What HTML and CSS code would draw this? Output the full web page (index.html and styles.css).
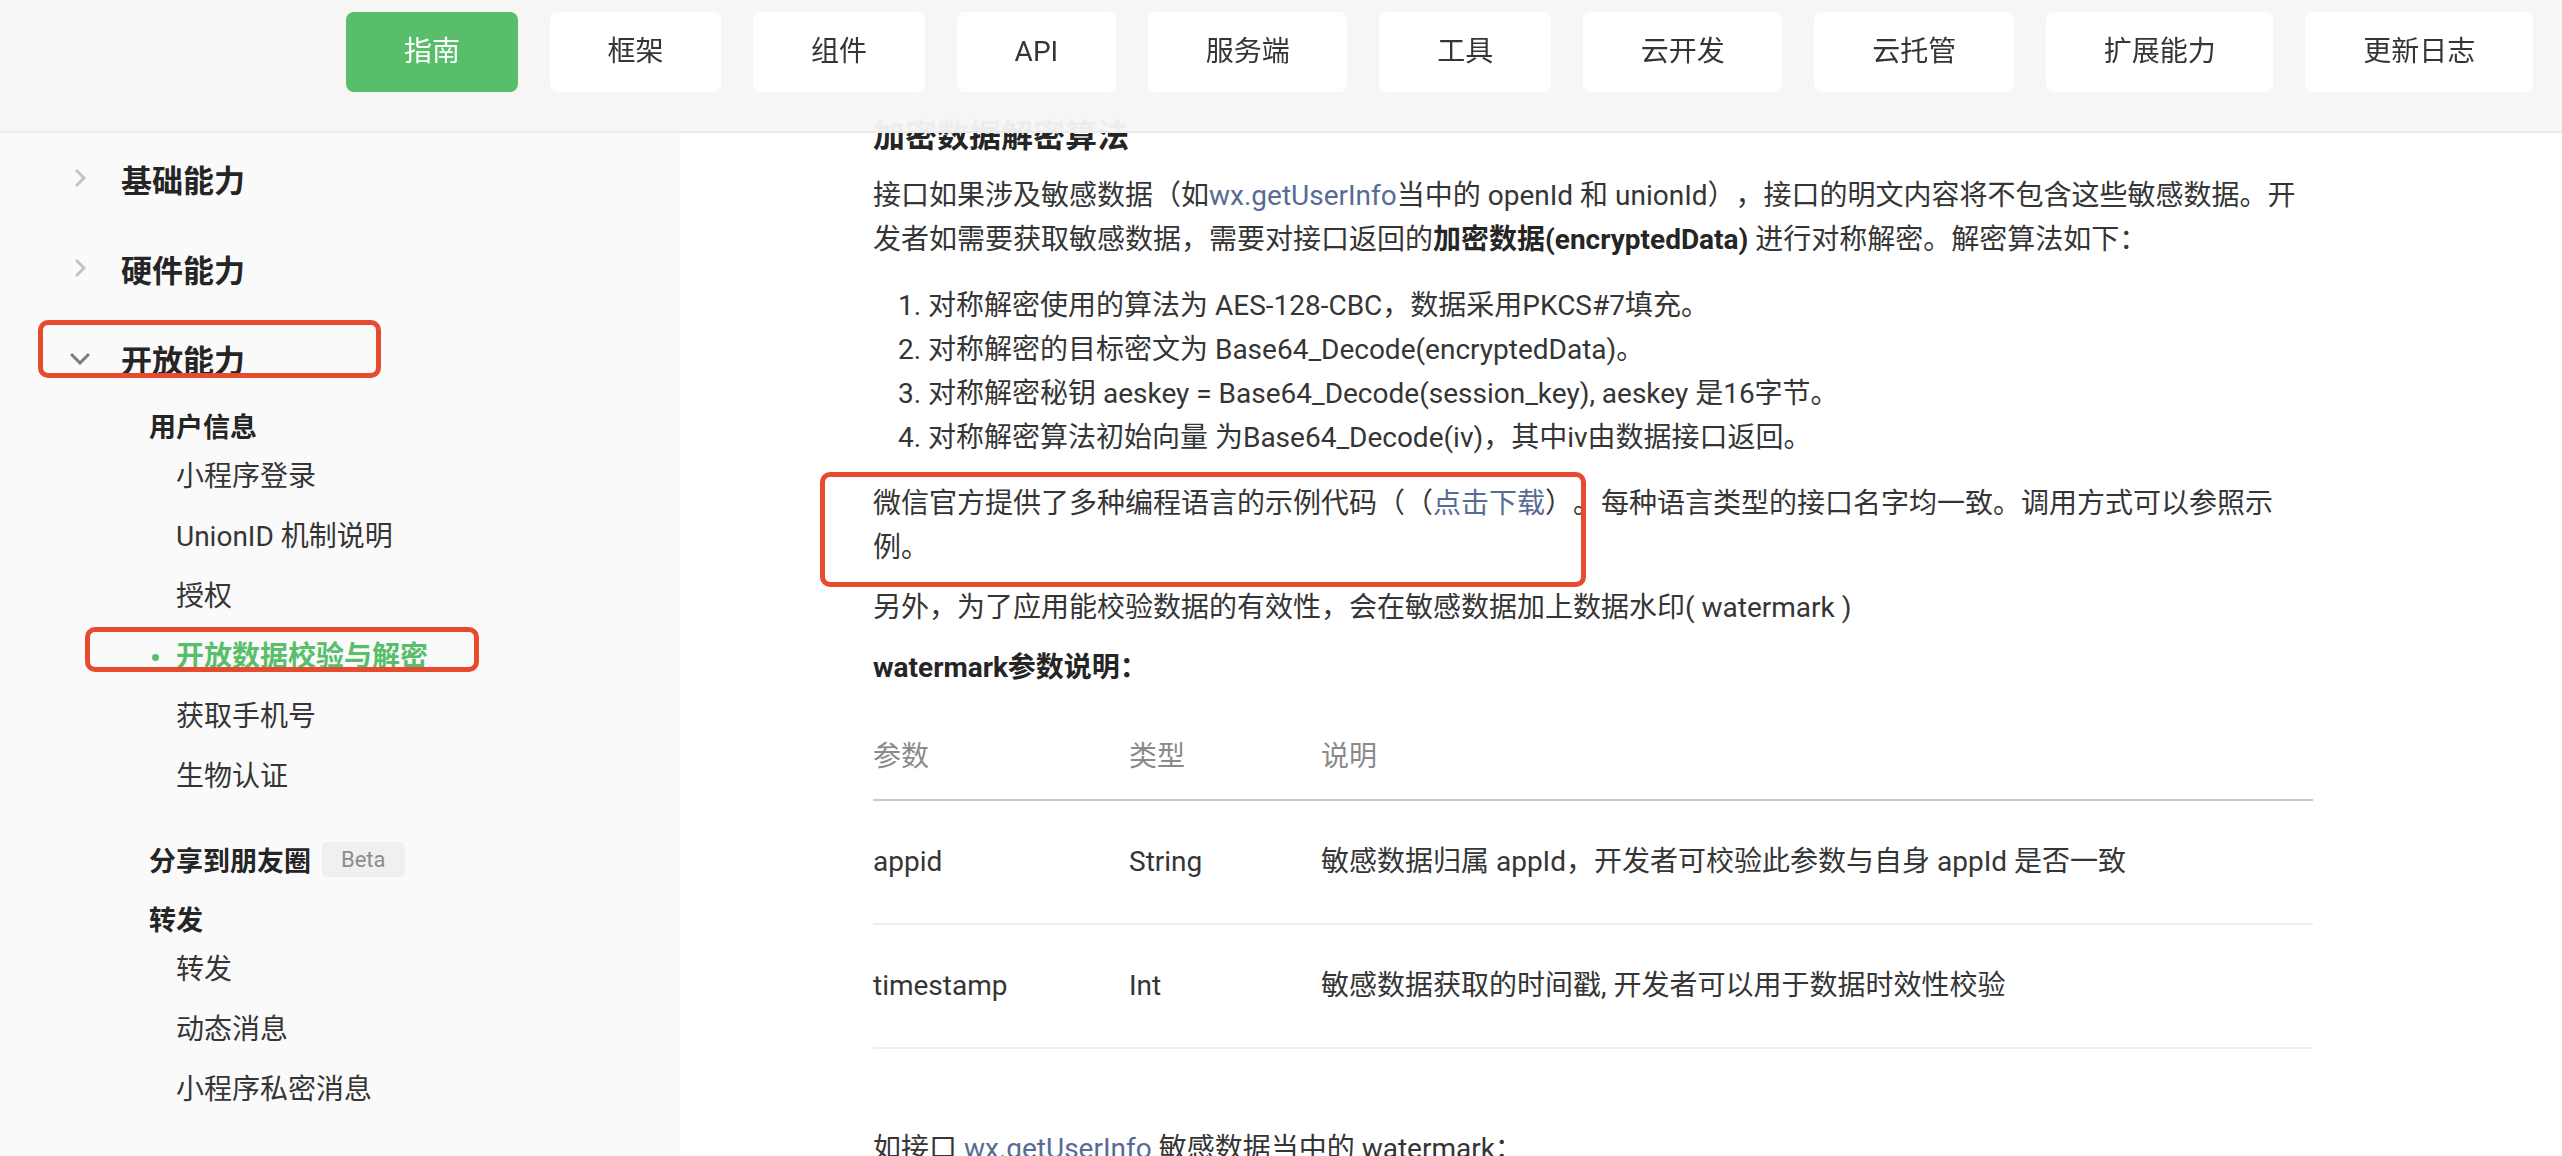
FILE: index.html
```html
<!DOCTYPE html>
<html lang="zh-CN">
<head>
    <meta charset="UTF-8">
    <meta name="viewport" content="width=device-width, initial-scale=1.0">
    <title>开放数据校验与解密 | 微信开放文档</title>
    <link rel="stylesheet" href="styles.css">
</head>
<body>

    <header class="topbar">
        <nav class="topnav">
            <a class="topnav-item active">指南</a>
            <a class="topnav-item">框架</a>
            <a class="topnav-item">组件</a>
            <a class="topnav-item">API</a>
            <a class="topnav-item">服务端</a>
            <a class="topnav-item">工具</a>
            <a class="topnav-item">云开发</a>
            <a class="topnav-item">云托管</a>
            <a class="topnav-item">扩展能力</a>
            <a class="topnav-item">更新日志</a>
        </nav>
    </header>

    <div class="page">
        <aside class="sidebar">
            <div class="nav-row">
                <svg class="arrow" viewBox="0 0 20 20"><polyline points="6,2 14,10 6,18" /></svg>
                <span>基础能力</span>
            </div>
            <div class="nav-row">
                <svg class="arrow" viewBox="0 0 20 20"><polyline points="6,2 14,10 6,18" /></svg>
                <span>硬件能力</span>
            </div>
            <div class="nav-row open">
                <svg class="arrow" viewBox="0 0 20 20"><polyline points="1,6 10,15 19,6" /></svg>
                <span>开放能力</span>
                <i class="annot annot-open"></i>
            </div>

            <div class="nav-group">
                <div class="group-title">用户信息</div>
                <ul class="group-items">
                    <li>小程序登录</li>
                    <li>UnionID 机制说明</li>
                    <li>授权</li>
                    <li class="active">开放数据校验与解密<i class="annot annot-active"></i></li>
                    <li>获取手机号</li>
                    <li>生物认证</li>
                </ul>
            </div>
            <div class="nav-group">
                <div class="group-title">分享到朋友圈 <span class="badge">Beta</span></div>
            </div>
            <div class="nav-group">
                <div class="group-title">转发</div>
                <ul class="group-items">
                    <li>转发</li>
                    <li>动态消息</li>
                    <li>小程序私密消息</li>
                </ul>
            </div>
        </aside>

        <main class="content">
            <div class="doc">
                <h3>加密数据解密算法</h3>
                <p>接口如果涉及敏感数据（如<a>wx.getUserInfo</a>当中的 openId 和 unionId），接口的明文内容将不包含这些敏感数据。开发者如需要获取敏感数据，需要对接口返回的<strong>加密数据(encryptedData)</strong> 进行对称解密。解密算法如下：</p>
                <ol>
                    <li>对称解密使用的算法为 AES-128-CBC，数据采用PKCS#7填充。</li>
                    <li>对称解密的目标密文为 Base64_Decode(encryptedData)。</li>
                    <li>对称解密秘钥 aeskey = Base64_Decode(session_key), aeskey 是16字节。</li>
                    <li>对称解密算法初始向量 为Base64_Decode(iv)，其中iv由数据接口返回。</li>
                </ol>
                <p class="marked">微信官方提供了多种编程语言的示例代码（（<a>点击下载</a>）。每种语言类型的接口名字均一致。调用方式可以参照示例。<i class="annot annot-sample"></i></p>
                <p>另外，为了应用能校验数据的有效性，会在敏感数据加上数据水印( watermark )</p>
                <p><strong>watermark参数说明：</strong></p>

                <table class="params">
                    <thead>
                        <tr><th>参数</th><th>类型</th><th>说明</th></tr>
                    </thead>
                    <tbody>
                        <tr><td>appid</td><td>String</td><td>敏感数据归属 appId，开发者可校验此参数与自身 appId 是否一致</td></tr>
                        <tr><td>timestamp</td><td>Int</td><td>敏感数据获取的时间戳, 开发者可以用于数据时效性校验</td></tr>
                    </tbody>
                </table>

                <p>如接口 <a>wx.getUserInfo</a> 敏感数据当中的 watermark：</p>
            </div>
        </main>
    </div>

</body>
</html>
```

FILE: styles.css
```css
body {
    margin: 0;
    font-family: Roboto, "Noto Sans CJK SC", sans-serif;
    color: #353535;
    background-color: #fff;
    text-spacing-trim: space-all;
}
a {
    color: #576b95;
    text-decoration: none;
}

/* 顶部导航 */
.topbar {
    position: fixed;
    top: 0;
    left: 0;
    right: 0;
    height: 131px;
    background-color: rgba(246, 246, 246, 0.96);
    border-bottom: 2px solid #ebebeb;
    z-index: 10;
}
.topnav {
    display: flex;
    justify-content: flex-end;
    gap: 32px;
    padding: 12px 29px 0 0;
}
.topnav-item {
    height: 80px;
    line-height: 80px;
    padding: 0 57.75px;
    background-color: #fff;
    border-radius: 8px;
    font-size: 28px;
    color: #353535;
}
.topnav-item.active {
    background-color: #58be6a;
    color: #fff;
}

.page {
    display: flex;
    min-height: 100vh;
}

/* 左侧菜单 */
.sidebar {
    flex: none;
    width: 680px;
    padding-top: 133px;
    background-color: #fafafa;
}
.nav-row {
    position: relative;
    display: flex;
    align-items: center;
    height: 90px;
    padding-left: 70px;
    font-size: 31px;
    font-weight: bold;
    color: #252525;
}
.arrow {
    width: 20px;
    height: 20px;
    margin-right: 31px;
    fill: none;
    stroke: #c4c4c4;
    stroke-width: 3;
}
.nav-row.open .arrow {
    stroke: #7a7a7a;
}
.nav-group {
    padding-left: 149px;
}
.nav-group + .nav-group {
    margin-top: 15px;
}
.group-title {
    display: flex;
    align-items: center;
    height: 44px;
    font-size: 27px;
    font-weight: bold;
    color: #252525;
}
.badge {
    margin-left: 11px;
    padding: 0 19px;
    height: 35px;
    line-height: 35px;
    font-size: 22px;
    font-weight: normal;
    color: #8c8c8c;
    background-color: #f0f0f0;
    border-radius: 5px;
}
.group-items {
    list-style: none;
    margin: 0;
    padding: 0 0 15px 27px;
}
.group-items li {
    position: relative;
    height: 60px;
    line-height: 60px;
    font-size: 28px;
    color: #353535;
}
.group-items li.active {
    color: #58be6a;
    font-weight: bold;
}
.group-items li.active::before {
    content: "";
    position: absolute;
    left: -24px;
    top: 27px;
    width: 7px;
    height: 7px;
    border-radius: 50%;
    background-color: #58be6a;
}

/* 正文 */
.content {
    flex: 1;
    padding: 114px 0 0 193px;
}
.doc {
    width: 1440px;
    font-size: 28px;
    line-height: 44px;
}
.doc h3 {
    margin: 0 0 16px;
    font-size: 32px;
    color: #252525;
}
.doc p {
    margin: 0 0 16px;
}
.doc strong {
    color: #252525;
}
.doc ol {
    margin: 22px 0;
    padding-left: 55px;
}
.marked {
    position: relative;
}
.params {
    width: 100%;
    margin: 25px 0 78px;
    border-collapse: collapse;
}
.params th {
    padding: 20px 0;
    text-align: left;
    font-weight: normal;
    color: #8a8a8a;
    border-bottom: 2px solid #cacaca;
}
.params td {
    padding: 39px 0;
    border-bottom: 2px solid #eeeeee;
}
.params th:nth-child(1) {
    width: 256px;
}
.params th:nth-child(2) {
    width: 192px;
}

/* 截图上的红框标注 */
.annot {
    position: absolute;
    box-sizing: border-box;
    border: 5px solid #e84a30;
    border-radius: 10px;
    pointer-events: none;
}
.annot-open {
    top: 7px;
    left: 38px;
    width: 343px;
    height: 58px;
}
.annot-active {
    top: 0;
    left: -91px;
    width: 394px;
    height: 45px;
}
.annot-sample {
    top: -10px;
    left: -53px;
    width: 766px;
    height: 115px;
}
```
